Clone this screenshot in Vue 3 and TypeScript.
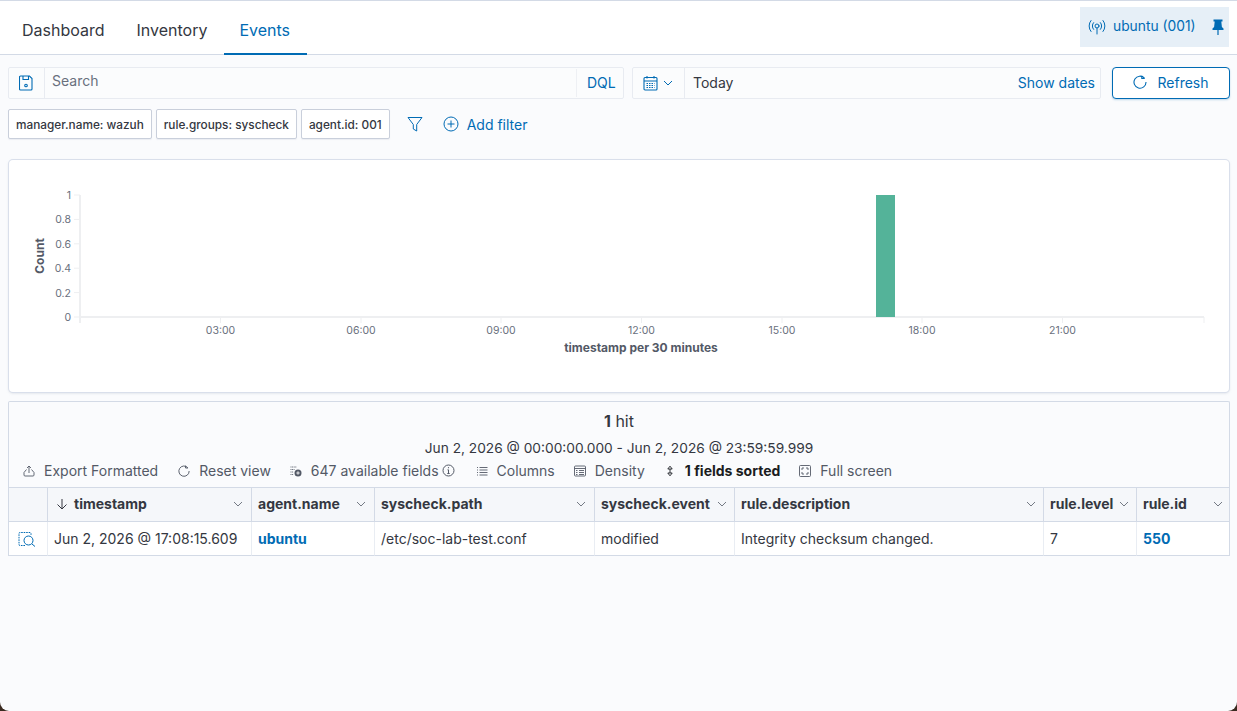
<template>
  <div class="page">
    <header class="tabs-bar">
      <nav class="tabs">
        <a v-for="tab in tabs" :key="tab" class="tab" :class="{ active: tab === 'Events' }">{{ tab }}</a>
      </nav>
      <div class="agent-badge">
        <svg class="ico" width="18" height="16" viewBox="0 0 18 16" fill="none" stroke="currentColor" stroke-width="1" stroke-linecap="round">
          <circle cx="9" cy="7" r="2" />
          <path d="M9 9v6" />
          <path d="M5.6 3.6a5 5 0 0 0 0 6.8M12.4 3.6a5 5 0 0 1 0 6.8" />
          <path d="M3 1.5a8.6 8.6 0 0 0 0 11M15 1.5a8.6 8.6 0 0 1 0 11" />
        </svg>
        <span class="agent-name">ubuntu (001)</span>
        <svg class="pin" width="12" height="16" viewBox="0 0 12 16" fill="currentColor">
          <path d="M1.5 0.5h9v2h-1.2l0.6 5.5 1.6 1.6v1.4H0.5V9.6l1.6-1.6 0.6-5.5H1.5z" />
          <rect x="5.4" y="11" width="1.2" height="5" />
        </svg>
      </div>
    </header>

    <section class="query-row">
      <div class="search-box">
        <span class="save-btn">
          <svg width="14" height="16" viewBox="0 0 14 16" fill="none" stroke="currentColor" stroke-width="1.1">
            <path d="M1.5 1h9l2.5 2.5v10.500a1 1 0 0 1-1 1h-10.500a1 1 0 0 1-1-1v-12a1 1 0 0 1 1-1z" />
            <path d="M4 1v3.500h5.500V1" />
            <circle cx="7" cy="10.500" r="1.300" />
          </svg>
        </span>
        <span class="search-text">Search</span>
        <span class="dql">DQL</span>
      </div>
      <div class="date-box">
        <span class="cal-btn">
          <svg width="15" height="16" viewBox="0 0 15 16" fill="none" stroke="currentColor" stroke-width="1.100">
            <rect x="1" y="2.500" width="13" height="12.500" rx="1" />
            <path d="M1 6h13M4 1v2.500M11 1v2.500" />
            <path d="M3.500 8.500h8M3.500 10.500h8M3.500 12.500h8" stroke-dasharray="1.500 1" />
          </svg>
          <svg class="chev" width="10" height="6" viewBox="0 0 10 6" fill="none" stroke="currentColor"><path d="M1 1l4 4 4-4" /></svg>
        </span>
        <span class="date-text">Today</span>
        <span class="show-dates">Show dates</span>
      </div>
      <button class="refresh">
        <svg width="14" height="14" viewBox="0 0 14 14" fill="none" stroke="currentColor" stroke-width="1.100">
          <path d="M11.500 3.200A6 6 0 1 0 13 7" />
          <path d="M8.800 0.800v2.700h2.900" />
        </svg>
        <span>Refresh</span>
      </button>
    </section>

    <section class="filter-row">
      <span v-for="filter in filters" :key="filter" class="filter-pill">{{ filter }}</span>
      <svg class="funnel" width="16" height="16" viewBox="0 0 16 16" fill="none" stroke="currentColor" stroke-width="1">
        <path d="M1 1.500h14L9.700 8.500v6.500l-3.400-2V8.500z" stroke-linejoin="round" />
      </svg>
      <span class="add-filter">
        <svg width="16" height="16" viewBox="0 0 16 16" fill="none" stroke="currentColor" stroke-width="1">
          <circle cx="8" cy="8" r="7" />
          <path d="M8 4.500v7M4.500 8h7" />
        </svg>
        Add filter
      </span>
    </section>

    <section class="chart-card">
      <svg class="chart" viewBox="9 160 1220 232" width="1220" height="232">
        <g stroke="#eeeff1" stroke-width="1">
          <path stroke-width="2" d="M80 195V323M79 317H1204" />
          <path v-for="y in yTicks" :key="y.label" :d="`M74 ${y.y}H80`" />
          <path v-for="x in xTicks" :key="x.label" :d="`M${x.x} 317V323`" />
          <path d="M1204 317V323" />
        </g>
        <rect x="876" y="195" width="19" height="122" fill="#54b399" />
        <g class="tick-text">
          <text v-for="y in yTicks" :key="y.label" x="71" :y="y.y + 4" text-anchor="end">{{ y.label }}</text>
          <text v-for="x in xTicks" :key="x.label" :x="x.x" y="334" text-anchor="middle">{{ x.label }}</text>
        </g>
        <text class="axis-title" x="641" y="352" text-anchor="middle">timestamp per 30 minutes</text>
        <text class="axis-title" transform="translate(43.5 256) rotate(-90)" text-anchor="middle">Count</text>
      </svg>
    </section>

    <section class="results">
      <div class="hits"><b>1</b> hit</div>
      <div class="range">Jun 2, 2026 @ 00:00:00.000 - Jun 2, 2026 @ 23:59:59.999</div>
      <div class="toolbar">
        <span class="tool">
          <svg width="12" height="12" viewBox="0 0 12 12" fill="none" stroke="currentColor" stroke-width="0.900">
            <path d="M1 7.500v2.500a1 1 0 0 0 1 1h8a1 1 0 0 0 1-1V7.500L8.500 4.500M1 7.500l2.500-3M6 8V1M4 3l2-2 2 2" />
          </svg>
          Export Formatted
        </span>
        <span class="tool reset">
          <svg width="12" height="12" viewBox="0 0 14 14" fill="none" stroke="currentColor" stroke-width="1.100">
            <path d="M11.500 3.200A6 6 0 1 0 13 7" />
            <path d="M8.800 0.800v2.700h2.900" />
          </svg>
          Reset view
        </span>
        <span class="tool">
          <svg width="12" height="12" viewBox="0 0 12 12" fill="none" stroke="currentColor" stroke-width="0.900">
            <path d="M0.500 2h6M0.500 4.500h4M0.500 7h3M0.500 9.500h3" stroke-dasharray="1 0.600" />
            <circle cx="8" cy="8" r="3.500" fill="currentColor" stroke="none" />
            <path d="M8 6.300v3.400M6.300 8h3.400" stroke="#fafbfd" />
          </svg>
          647 available fields
          <svg class="info" width="13" height="13" viewBox="0 0 13 13" fill="none" stroke="currentColor" stroke-width="1">
            <circle cx="6.500" cy="6.500" r="5.500" />
            <path d="M6.500 5.800v3.500M5.300 9.500h2.400M5.500 5.800h1" />
            <circle cx="6.500" cy="3.700" r="0.600" fill="currentColor" stroke="none" />
          </svg>
        </span>
        <span class="tool columns">
          <svg width="12" height="12" viewBox="0 0 12 12" fill="none" stroke="currentColor" stroke-width="0.900">
            <path d="M1 2.500h1M1 5h1M1 7.500h1M1 10h1M3.500 2.500h8M3.500 5h8M3.500 7.500h8M3.500 10h8" />
          </svg>
          Columns
        </span>
        <span class="tool">
          <svg width="12" height="12" viewBox="0 0 12 12" fill="none" stroke="currentColor" stroke-width="0.900">
            <rect x="0.500" y="1" width="11" height="10" rx="1" />
            <path d="M0.500 3.500h11M2 5.500h1.500M5 5.500h5M2 7.500h1.500M5 7.500h5M2 9.500h1.500M5 9.500h5" />
          </svg>
          Density
        </span>
        <span class="tool sorted">
          <svg width="12" height="12" viewBox="0 0 12 12" fill="none" stroke="currentColor" stroke-width="0.900">
            <path d="M6 1.200L8.200 4H3.800zM6 10.800L8.200 8H3.800zM6 4v4" stroke-linejoin="round" />
          </svg>
          1 fields sorted
        </span>
        <span class="tool">
          <svg width="12" height="12" viewBox="0 0 12 12" fill="none" stroke="currentColor" stroke-width="0.900">
            <rect x="0.500" y="0.500" width="11" height="11" rx="1" />
            <path d="M3 5V3h2M7 3h2v2M9 7v2H7M5 9H3V7" />
          </svg>
          Full screen
        </span>
      </div>

      <div class="grid">
        <div class="cell head"></div>
        <div v-for="col in columns" :key="col.name" class="cell head">
          <svg v-if="col.sorted" class="sort-arrow" width="12" height="12" viewBox="0 0 12 12" fill="none" stroke="currentColor">
            <path d="M6 1v10M1.500 6.500L6 11l4.500-4.500" />
          </svg>
          <span class="col-name">{{ col.name }}</span>
          <svg class="chev" width="10" height="6" viewBox="0 0 10 6" fill="none" stroke="currentColor" stroke-width="0.800"><path d="M1 1l4 4 4-4" /></svg>
        </div>

        <div class="cell row-icon">
          <svg width="18" height="16" viewBox="0 0 18 16" fill="none" stroke="#006bb4" stroke-width="1">
            <path d="M7 14.500H2a1 1 0 0 1-1-1v-11a1 1 0 0 1 1-1h10a1 1 0 0 1 1 1v2" stroke-dasharray="1.600 0.900" />
            <circle cx="10.500" cy="9.500" r="4.500" />
            <path d="M14 13l3 2.500" />
          </svg>
        </div>
        <div v-for="col in columns" :key="col.name + '-val'" class="cell" :class="{ link: col.link }">{{ col.value }}</div>
      </div>
    </section>
  </div>
</template>

<script setup lang="ts">
interface Column {
  name: string;
  value: string;
  sorted?: boolean;
  link?: boolean;
}

const tabs = ["Dashboard", "Inventory", "Events"];
const filters = ["manager.name: wazuh", "rule.groups: syscheck", "agent.id: 001"];

const yTicks = [
  { label: "1", y: 195 },
  { label: "0.8", y: 219.4 },
  { label: "0.6", y: 243.8 },
  { label: "0.4", y: 268.2 },
  { label: "0.2", y: 292.6 },
  { label: "0", y: 317 },
];

const xTicks = [
  { label: "03:00", x: 220.5 },
  { label: "06:00", x: 361 },
  { label: "09:00", x: 501 },
  { label: "12:00", x: 641.5 },
  { label: "15:00", x: 782 },
  { label: "18:00", x: 922 },
  { label: "21:00", x: 1062.5 },
];

const columns: Column[] = [
  { name: "timestamp", value: "Jun 2, 2026 @ 17:08:15.609", sorted: true },
  { name: "agent.name", value: "ubuntu", link: true },
  { name: "syscheck.path", value: "/etc/soc-lab-test.conf" },
  { name: "syscheck.event", value: "modified" },
  { name: "rule.description", value: "Integrity checksum changed." },
  { name: "rule.level", value: "7" },
  { name: "rule.id", value: "550", link: true },
];
</script>

<style>
html,
body {
  margin: 0;
  background: #3a2a20;
}
</style>

<style scoped>
.page {
  box-sizing: border-box;
  width: 1237px;
  height: 711px;
  overflow: hidden;
  background: #fafbfd;
  border-top: 1px solid #d3dae6;
  border-radius: 0 0 9px 9px;
  font-family: Inter, "Liberation Sans", sans-serif;
  font-size: 14px;
  color: #343741;
}
.tabs-bar {
  display: flex;
  justify-content: space-between;
  align-items: flex-start;
  height: 54px;
  padding: 6px 8px 0 6px;
  box-sizing: border-box;
  background: #fff;
  border-bottom: 1px solid #d3dae6;
}
.tabs {
  display: flex;
  margin-top: -6px;
  height: 54px;
}
.tab {
  padding: 0 16px;
  font-size: 16px;
  line-height: 58px;
  height: 54px;
  box-sizing: border-box;
}
.tab.active {
  margin-left: 1px;
  padding: 0 17px 0 15px;
  color: #006bb4;
  border-bottom: 2px solid #006bb4;
}
.agent-badge {
  display: flex;
  align-items: center;
  width: 149px;
  height: 40px;
  padding: 0 5px 0 8px;
  box-sizing: border-box;
  background: #e6eff7;
  color: #006bb4;
}
.agent-name {
  margin: -2px 0 0 7px;
  flex: 1;
  font-size: 13.8px;
}
.pin {
  margin-bottom: 1px;
}
.query-row {
  display: flex;
  align-items: flex-start;
  margin-top: 12px;
  padding: 0 7px 0 8px;
}
.search-box,
.date-box {
  display: flex;
  align-items: center;
  height: 32px;
  box-sizing: border-box;
  border: 1px solid #e8ebf1;
  border-radius: 2px;
  background: #fbfcfd;
}
.search-box {
  width: 616px;
}
.save-btn {
  display: flex;
  align-items: center;
  justify-content: center;
  width: 36px;
  height: 100%;
  padding-right: 1px;
  box-sizing: border-box;
  border-right: 1px solid #e8ebf1;
  color: #006bb4;
}
.search-text {
  flex: 1;
  margin: -5px 0 0 7px;
  color: #69707d;
}
.dql {
  width: 47px;
  line-height: 28px;
  padding-left: 10px;
  box-sizing: border-box;
  border-left: 1px solid #eef0f4;
  color: #006bb4;
}
.date-box {
  width: 469px;
  margin-left: 8px;
}
.cal-btn {
  display: flex;
  align-items: center;
  gap: 5px;
  width: 52px;
  height: 100%;
  padding-left: 10px;
  box-sizing: border-box;
  border-right: 1px solid #e8ebf1;
  color: #006bb4;
}
.date-text {
  flex: 1;
  margin: -2px 0 0 8px;
}
.show-dates {
  margin: -2px 5px 0 0;
  color: #006bb4;
}
.refresh {
  display: flex;
  align-items: center;
  justify-content: center;
  gap: 10px;
  width: 118px;
  height: 32px;
  margin-left: 11px;
  padding: 0 0 2px;
  background: #fff;
  border: 1px solid #006bb4;
  border-radius: 4px;
  box-shadow: 0 1px 2px rgba(0, 107, 180, 0.25);
  font: inherit;
  color: #006bb4;
}
.filter-row {
  display: flex;
  align-items: center;
  gap: 4px;
  margin-top: 10px;
  padding-left: 8px;
}
.filter-pill {
  height: 30px;
  line-height: 30px;
  padding: 0 7px;
  box-sizing: border-box;
  background: #fff;
  border: 1px solid #c9cfdb;
  border-radius: 2px;
  box-shadow: 0 1px 1px rgba(152, 162, 179, 0.15);
  font-size: 11.8px;
  font-weight: 500;
  white-space: nowrap;
}
.funnel {
  margin-left: 13px;
  color: #006bb4;
}
.add-filter {
  display: flex;
  align-items: center;
  gap: 8px;
  margin-left: 16px;
  color: #006bb4;
}
.chart-card {
  box-sizing: border-box;
  width: 1220px;
  height: 232px;
  margin: 21px 0 0 9px;
  background: #fff;
  border-radius: 4px;
  box-shadow: 0 0 0 1px #d9dfeb, 0 1px 3px rgba(152, 162, 179, 0.4);
  overflow: hidden;
}
.chart {
  display: block;
}
.tick-text {
  font-size: 10.5px;
  fill: #69707d;
}
.axis-title {
  font-size: 12px;
  font-weight: 700;
  fill: #535966;
}
.results {
  box-sizing: border-box;
  width: 1222px;
  margin: 9px 0 0 8px;
  border: 1px solid #d3dae6;
  border-bottom: 0;
  border-radius: 2px 2px 0 0;
}
.hits {
  margin-top: 9px;
  font-size: 16px;
  line-height: 20px;
  text-align: center;
}
.range {
  margin-top: 7px;
  font-size: 13.72px;
  line-height: 20px;
  text-align: center;
}
.toolbar {
  display: flex;
  align-items: center;
  gap: 19px;
  height: 29px;
  padding: 0 0 4px 14px;
  box-sizing: border-box;
}
.tool {
  display: flex;
  align-items: center;
  gap: 9px;
  color: #535966;
  white-space: nowrap;
}
.tool .info {
  margin-left: -6px;
}
.reset {
  margin-left: 1px;
}
.columns {
  margin-left: 2px;
}
.sorted {
  color: #1a1c21;
  font-weight: 700;
}
.grid {
  display: grid;
  grid-template-columns: 39px 204px 123px 220px 140px 309px 93px 92px;
}
.cell {
  display: flex;
  align-items: center;
  height: 34px;
  padding: 0 6px;
  box-sizing: border-box;
  border-right: 1px solid #e9edf3;
  border-bottom: 1px solid #d3dae6;
  background: #fff;
  white-space: nowrap;
  overflow: hidden;
}
.cell:nth-child(8n) {
  border-right: 0;
}
.head {
  height: 35px;
  padding-bottom: 2px;
  background: #f5f7fa;
  border-top: 1px solid #d3dae6;
  border-right-color: #d3dae6;
  color: #343741;
  font-weight: 700;
}
.col-name {
  flex: 1;
}
.sort-arrow {
  margin: 0 6px 0 2px;
}
.head .chev {
  flex: none;
  margin-right: 1px;
  color: #535966;
}
.head:nth-child(-n + 4) .chev {
  margin-right: 2px;
}
.head:nth-child(8) .chev {
  margin-right: 0;
}
.row-icon {
  justify-content: center;
  padding: 0 2px 0 0;
}
.link {
  color: #006bb4;
  font-weight: 700;
}
</style>
